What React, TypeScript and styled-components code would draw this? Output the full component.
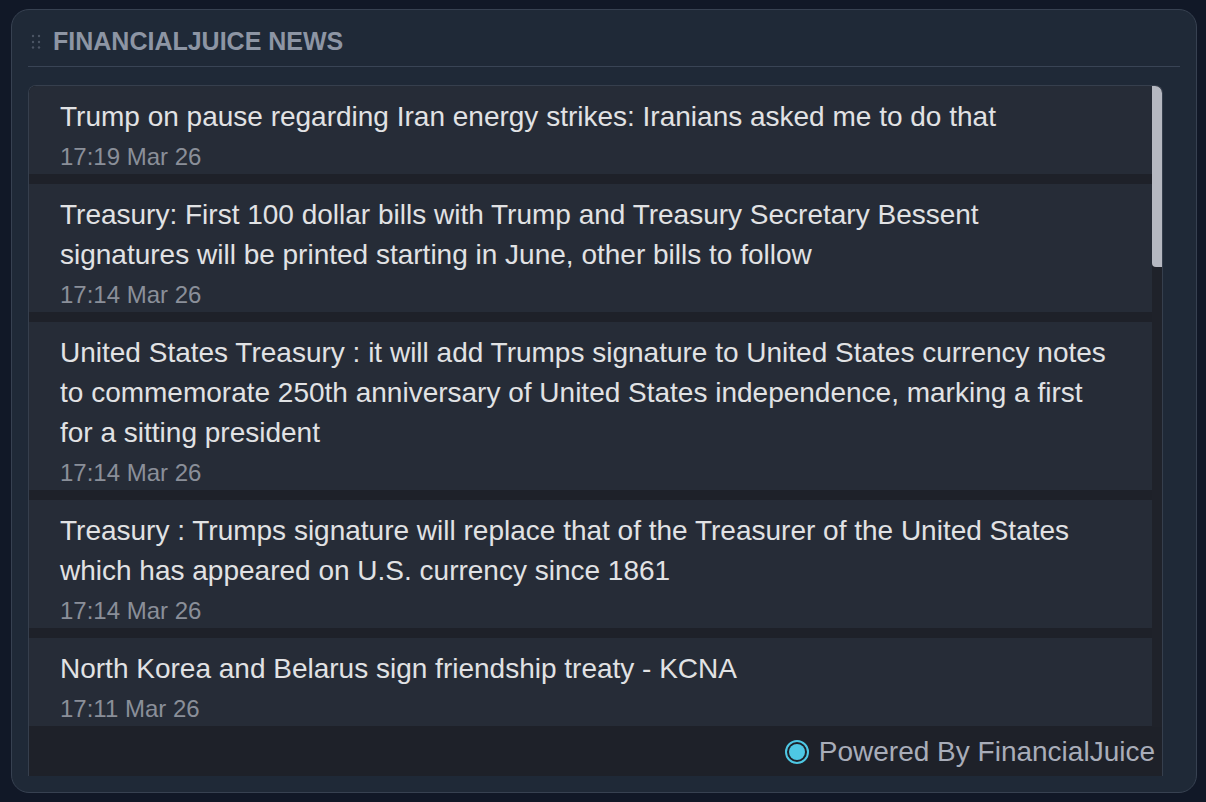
import React from "react";
import styled, { createGlobalStyle } from "styled-components";

type NewsItem = { title: string; time: string };

const news: NewsItem[] = [
  { title: "Trump on pause regarding Iran energy strikes: Iranians asked me to do that", time: "17:19 Mar 26" },
  {
    title:
      "Treasury: First 100 dollar bills with Trump and Treasury Secretary Bessent signatures will be printed starting in June, other bills to follow",
    time: "17:14 Mar 26",
  },
  {
    title:
      "United States Treasury : it will add Trumps signature to United States currency notes to commemorate 250th anniversary of United States independence, marking a first for a sitting president",
    time: "17:14 Mar 26",
  },
  {
    title:
      "Treasury : Trumps signature will replace that of the Treasurer of the United States which has appeared on U.S. currency since 1861",
    time: "17:14 Mar 26",
  },
  { title: "North Korea and Belarus sign friendship treaty - KCNA", time: "17:11 Mar 26" },
];

const GlobalStyle = createGlobalStyle`
  html, body {
    margin: 0;
    padding: 0;
    background: #111827;
  }
  body {
    font-family: "Liberation Sans", Arial, Helvetica, sans-serif;
  }
`;

const Page = styled.div`
  width: 1206px;
  height: 802px;
  box-sizing: border-box;
  padding: 9px 9px 9px 11px;
  background: #111827;
`;

const Card = styled.section`
  height: 100%;
  box-sizing: border-box;
  display: flex;
  flex-direction: column;
  background: #1f2937;
  border: 1px solid #374151;
  border-radius: 18px;
  padding: 0 16px 16px 16px;
`;

const Header = styled.header`
  display: flex;
  align-items: center;
  gap: 11px;
  padding: 16px 0 10px 2px;
  border-bottom: 1px solid #394455;
`;

const Grip = styled.svg`
  width: 12px;
  height: 16px;
  flex: none;
`;

const Title = styled.h2`
  margin: 0;
  font-size: 25px;
  line-height: 30px;
  font-weight: 700;
  color: #8d95a4;
`;

const Body = styled.div`
  flex: 1;
  min-height: 0;
  margin: 18px 17px 0 0;
  display: flex;
  flex-direction: column;
  border: 1px solid #363f4d;
  border-bottom: none;
  border-radius: 8px 8px 0 0;
  overflow: hidden;
  background: #1e2129;
`;

const Viewport = styled.div`
  flex: 1;
  min-height: 0;
  display: flex;
`;

const List = styled.ul`
  flex: 1;
  min-width: 0;
  margin: 0;
  padding: 0;
  list-style: none;
  overflow: hidden;
  background: #1e2129;
`;

const Rail = styled.div`
  flex: none;
  width: 10px;
  background: #1f222a;
`;

const Thumb = styled.div<{ $size: number }>`
  height: ${(p) => p.$size}px;
  background: #b5b8c1;
  border-radius: 0 0 0 4px;
`;

const Item = styled.li`
  background: #262c37;
  padding: 11px 40px 0 31px;
  margin-bottom: 10px;
`;

const Headline = styled.div`
  font-size: 28px;
  line-height: 40px;
  color: #e1e2e4;
`;

const Time = styled.div`
  margin-top: 2px;
  font-size: 24px;
  line-height: 35px;
  color: #8a8f99;
`;

const Footer = styled.footer`
  flex: none;
  height: 49px;
  display: flex;
  align-items: center;
  justify-content: flex-end;
  gap: 10px;
  padding-right: 7px;
  background: #1e2129;
`;

const Dot = styled.span`
  width: 20px;
  height: 20px;
  border-radius: 50%;
  border: 2px solid #4ec8e4;
  display: flex;
  align-items: center;
  justify-content: center;

  &::after {
    content: "";
    width: 16px;
    height: 16px;
    border-radius: 50%;
    background: #4ec8e4;
  }
`;

const Powered = styled.span`
  font-size: 28px;
  line-height: 34px;
  color: #a9adb9;
`;

const GripIcon = () => (
  <Grip viewBox="0 0 12 16">
    {[3, 9].map((cx) =>
      [3, 9, 14.5].map((cy) => <circle key={`${cx}-${cy}`} cx={cx} cy={cy} r={1.2} fill="#4b5464" />)
    )}
  </Grip>
);

const App: React.FC = () => (
  <>
    <GlobalStyle />
    <Page>
      <Card>
        <Header>
          <GripIcon />
          <Title>FINANCIALJUICE NEWS</Title>
        </Header>
        <Body>
          <Viewport>
            <List>
              {news.map((n, i) => (
                <Item key={i}>
                  <Headline>{n.title}</Headline>
                  <Time>{n.time}</Time>
                </Item>
              ))}
            </List>
            <Rail>
              <Thumb $size={181} />
            </Rail>
          </Viewport>
          <Footer>
            <Dot />
            <Powered>Powered By FinancialJuice</Powered>
          </Footer>
        </Body>
      </Card>
    </Page>
  </>
);

export default App;
